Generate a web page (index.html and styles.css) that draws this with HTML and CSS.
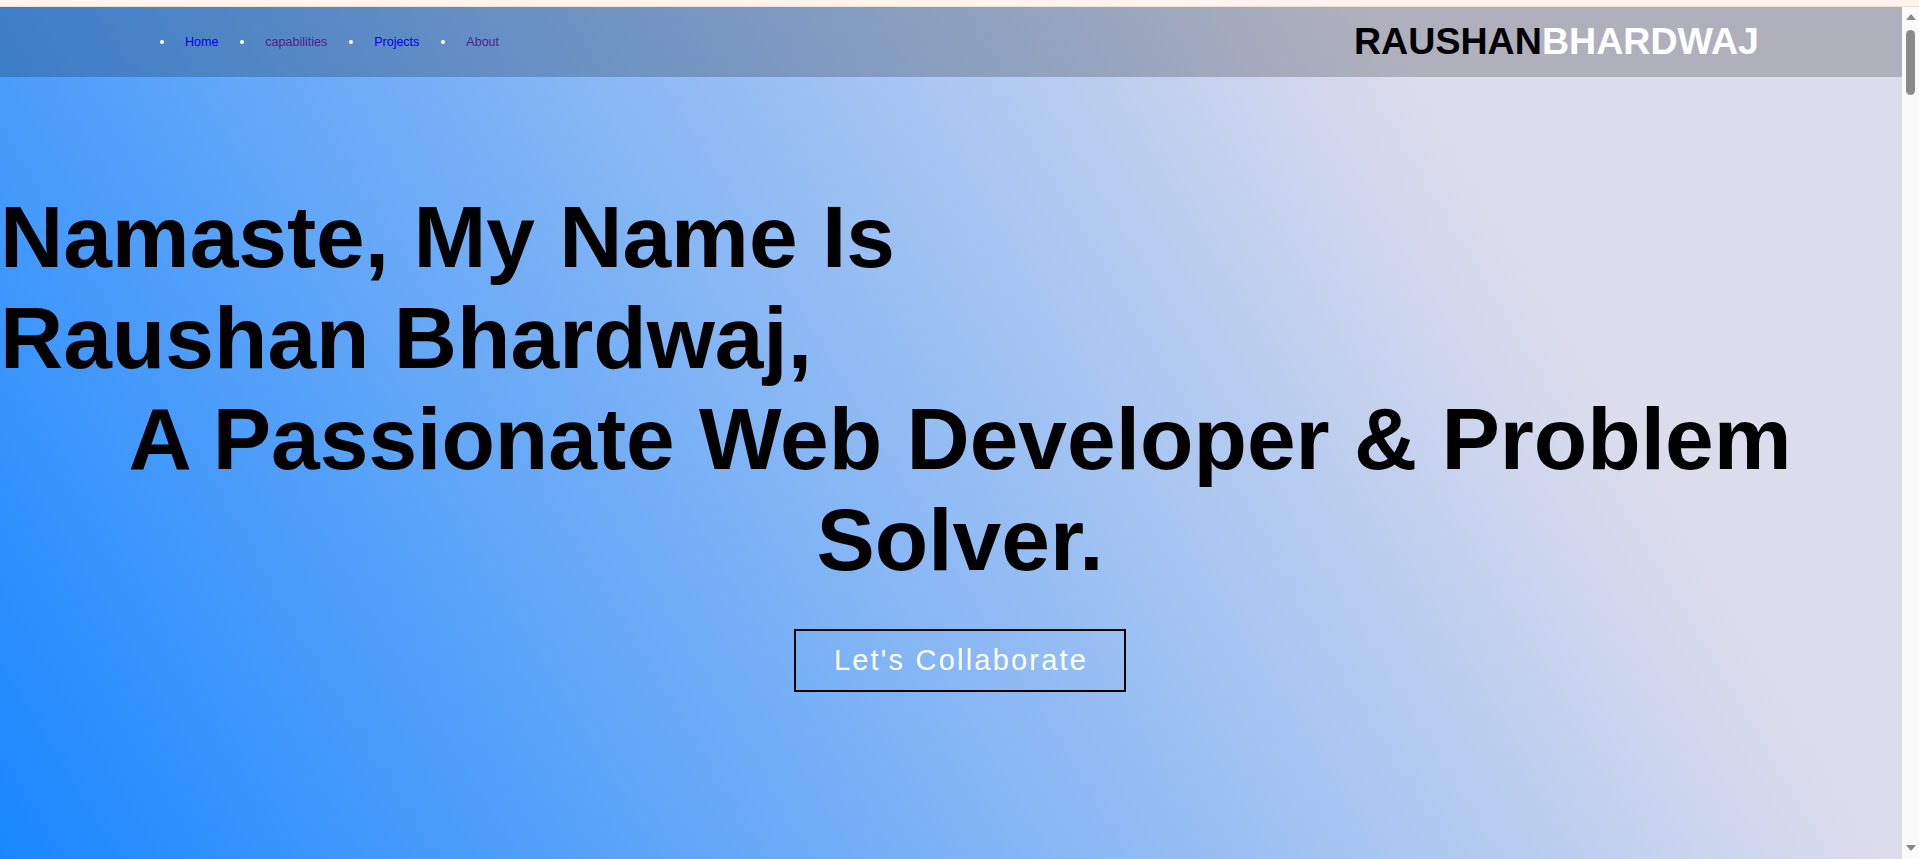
FILE: index.html
```html
<!DOCTYPE html>
<html lang="en">
<head>
<meta charset="utf-8">
<title>Raushan Bhardwaj</title>
<link rel="stylesheet" href="styles.css">
</head>
<body>
  <div class="top-strip"></div>
  <div class="viewport">
    <div class="hero" id="home">
      <header class="site-header">
        <nav class="main-nav">
          <ul class="nav-list">
            <li class="nav-item"><a class="nav-link" href="#home">Home</a></li>
            <li class="nav-item"><a class="nav-link nav-link-visited" href="#capabilities">capabilities</a></li>
            <li class="nav-item"><a class="nav-link" href="#projects">Projects</a></li>
            <li class="nav-item"><a class="nav-link nav-link-visited" href="#about">About</a></li>
          </ul>
        </nav>
        <div class="logo"><span class="logo-first">RAUSHAN</span><span class="logo-last">BHARDWAJ</span></div>
      </header>

      <section class="intro">
        <h1 class="intro-title">
          <span class="intro-name">Namaste, My Name Is Raushan Bhardwaj,</span>
          <span class="intro-role">A Passionate Web Developer &amp; Problem Solver.</span>
        </h1>
        <div class="cta-row">
          <a class="cta" href="#about">Let's Collaborate</a>
        </div>
      </section>
    </div>

    <div class="scrollbar" aria-hidden="true">
      <span class="scroll-arrow scroll-arrow-up"></span>
      <span class="scroll-thumb"></span>
      <span class="scroll-space"></span>
      <span class="scroll-arrow scroll-arrow-down"></span>
    </div>
  </div>
</body>
</html>
```

FILE: styles.css
```css
html,
body {
  height: 100%;
}

body {
  margin: 0;
  background: #fff5ee;
  font-family: "Liberation Sans", Arial, sans-serif;
  color: #000;
  display: flex;
  flex-direction: column;
  overflow: hidden;
}

.top-strip {
  height: 6px;
  border-bottom: 1px solid #eee0d2;
  background: #fff5ee;
  flex: none;
}

.viewport {
  height: 852px;
  display: flex;
  flex: none;
}

.hero {
  flex: 1;
  min-width: 0;
  background: linear-gradient(59deg, #1a87ff 0%, #dcdcec 78%);
  display: flex;
  flex-direction: column;
}

.site-header {
  height: 70px;
  flex: none;
  display: flex;
  align-items: center;
  justify-content: space-between;
  padding: 0 143px 0 160px;
  background: rgba(0, 0, 0, 0.2);
}

.nav-list {
  display: flex;
  align-items: center;
  gap: 22px;
  list-style: none;
  margin: 0;
  padding: 0;
}

.nav-item {
  display: flex;
  align-items: center;
  font-size: 12.5px;
}

.nav-item::before {
  content: "";
  width: 4px;
  height: 4px;
  border-radius: 50%;
  background: #fff;
  margin-right: 21px;
}

.nav-link {
  color: #0000ee;
  text-decoration: none;
}

.nav-link-visited {
  color: #551a8b;
}

.logo {
  font-size: 37.6px;
  font-weight: 700;
  line-height: 1;
}

.logo-first {
  color: #000;
}

.logo-last {
  color: #fff;
}

.intro {
  padding-top: 110px;
}

.intro-title {
  margin: 0;
  font-size: 87.5px;
  font-weight: 700;
  line-height: normal;
}

.intro-name {
  display: block;
  width: 50%;
}

.intro-role {
  display: block;
  text-align: center;
  padding-left: 18px;
}

.cta-row {
  margin-top: 38px;
  display: flex;
  justify-content: center;
  padding-left: 18px;
}

.cta {
  display: inline-block;
  padding: 13px 36px 13px 38px;
  border: 2px solid #000;
  color: #fff;
  font-size: 29px;
  letter-spacing: 2.2px;
  text-decoration: none;
  line-height: normal;
}

.scrollbar {
  width: 17px;
  flex: none;
  background: #fafafa;
  display: flex;
  flex-direction: column;
  align-items: center;
}

.scroll-arrow {
  width: 0;
  height: 0;
  border-left: 5px solid transparent;
  border-right: 5px solid transparent;
}

.scroll-arrow-up {
  margin-top: 7px;
  border-bottom: 6px solid #8a8a8a;
}

.scroll-arrow-down {
  margin-bottom: 8px;
  border-top: 6px solid #8a8a8a;
}

.scroll-thumb {
  width: 9px;
  height: 65px;
  margin-top: 10px;
  border-radius: 5px;
  background: #8a8a8a;
}

.scroll-space {
  flex: 1;
}
```
